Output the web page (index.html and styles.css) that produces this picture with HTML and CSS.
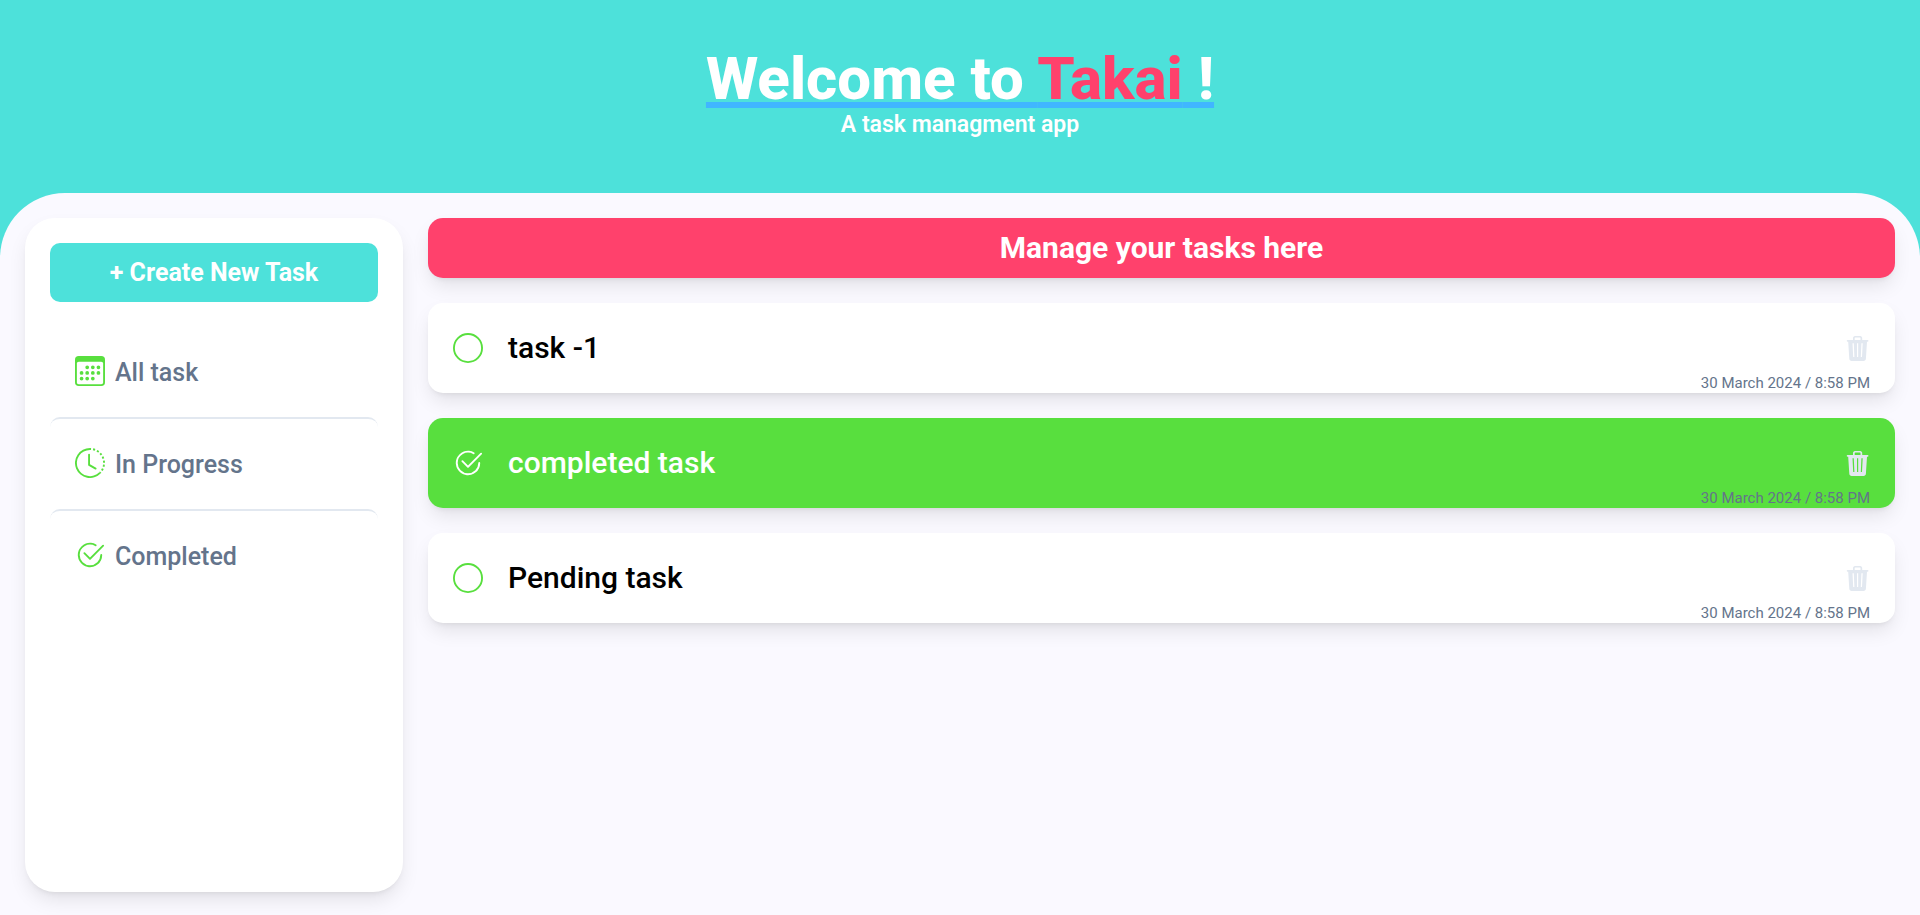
FILE: index.html
```html
<!DOCTYPE html>
<html lang="en">
<head>
<meta charset="utf-8">
<meta name="viewport" content="width=device-width, initial-scale=1">
<title>Takai</title>
<link rel="stylesheet" href="styles.css">
</head>
<body>
<svg class="sprite" aria-hidden="true">
  <symbol id="calendar" viewBox="0 0 16 16">
    <path d="M14 0H2a2 2 0 0 0-2 2v12a2 2 0 0 0 2 2h12a2 2 0 0 0 2-2V2a2 2 0 0 0-2-2M1 3.857C1 3.384 1.448 3 2 3h12c.552 0 1 .384 1 .857v10.286c0 .473-.448.857-1 .857H2c-.552 0-1-.384-1-.857z"/>
    <path d="M6.500 7a1 1 0 1 0 0-2 1 1 0 0 0 0 2m3 0a1 1 0 1 0 0-2 1 1 0 0 0 0 2m3 0a1 1 0 1 0 0-2 1 1 0 0 0 0 2m-9 3a1 1 0 1 0 0-2 1 1 0 0 0 0 2m3 0a1 1 0 1 0 0-2 1 1 0 0 0 0 2m3 0a1 1 0 1 0 0-2 1 1 0 0 0 0 2m3 0a1 1 0 1 0 0-2 1 1 0 0 0 0 2m-9 3a1 1 0 1 0 0-2 1 1 0 0 0 0 2m3 0a1 1 0 1 0 0-2 1 1 0 0 0 0 2m3 0a1 1 0 1 0 0-2 1 1 0 0 0 0 2"/>
  </symbol>
  <symbol id="clock" viewBox="0 0 16 16">
    <path d="M8.515 1.019A7 7 0 0 0 8 1V0a8 8 0 0 1 .589.022zm2.004.45a7 7 0 0 0-.985-.299l.219-.976q.576.129 1.126.342zm1.370.71a7 7 0 0 0-.439-.27l.493-.87a8 8 0 0 1 .979.654l-.615.789a7 7 0 0 0-.418-.302zm1.834 1.790a7 7 0 0 0-.653-.796l.724-.690q.406.429.747.910zm.744 1.352a7 7 0 0 0-.214-.468l.893-.450a8 8 0 0 1 .450 1.088l-.950.313a7 7 0 0 0-.179-.483m.530 2.507a7 7 0 0 0-.100-1.025l.985-.170q.100.580.116 1.170zm-.131 1.538q.050-.254.081-.510l.993.123a8 8 0 0 1-.230 1.155l-.964-.267q.069-.247.120-.501m-.952 2.379q.276-.436.486-.908l.914.405q-.240.540-.555 1.038zm-.964 1.205q.183-.183.350-.378l.758.653a8 8 0 0 1-.401.432z"/>
    <path d="M8 1a7 7 0 1 0 4.950 11.950l.707.707A8.001 8.001 0 1 1 8 0z"/>
    <path d="M7.500 3a.5.5 0 0 1 .5.5v5.210l3.248 1.856a.5.5 0 0 1-.496.868l-3.500-2A.5.5 0 0 1 7 9V3.500a.5.5 0 0 1 .5-.5"/>
  </symbol>
  <symbol id="done" viewBox="0 0 16 16">
    <path d="M2.500 8a5.500 5.500 0 0 1 8.250-4.764.5.5 0 0 0 .5-.866A6.500 6.500 0 1 0 14.500 8a.5.5 0 0 0-1 0 5.500 5.500 0 1 1-11 0"/>
    <path d="M15.354 3.354a.5.5 0 0 0-.708-.708L8 9.293 5.354 6.646a.5.5 0 1 0-.708.708l3 3a.5.5 0 0 0 .708 0z"/>
  </symbol>
  <symbol id="circle" viewBox="0 0 16 16">
    <path d="M8 15A7 7 0 1 1 8 1a7 7 0 0 1 0 14m0 1A8 8 0 1 0 8 0a8 8 0 0 0 0 16"/>
  </symbol>
  <symbol id="trash" viewBox="0 0 25 25">
    <path fill-rule="evenodd" d="M8 4V2.200C8 1 8.800 0 10 0h5.200c1.200 0 2 1 2 2.200V4H22.700c1 0 1 1.700 0 1.700h-.7L20.900 22.800c-.1 1.300-1 2.200-2.300 2.200H6.600c-1.300 0-2.200-.9-2.300-2.200L3.200 5.700H2.500C1.500 5.700 1.500 4 2.500 4ZM9.700 4H15.500V2.200c0-.4-.2-.6-.6-.6h-4.600c-.4 0-.6.2-.6.600ZM7.500 7.200l.7 13.900h1.200L8.800 7.200ZM12 7.200v13.900h1.200V7.200ZM16.400 7.200l-.6 13.900h1.200l.7-13.900Z"/>
  </symbol>
</svg>

<header class="hero">
  <h1 class="hero-title">Welcome to <span class="brand">Takai</span> !</h1>
  <p class="hero-subtitle">A task managment app</p>
</header>

<main class="panel">
  <aside class="sidebar">
    <button class="create" type="button">+ Create New Task</button>
    <nav class="filters" aria-label="Task filters">
      <button class="filter" type="button"><svg class="icon"><use href="#calendar"/></svg>All task</button>
      <button class="filter" type="button"><svg class="icon"><use href="#clock"/></svg>In Progress</button>
      <button class="filter" type="button"><svg class="icon"><use href="#done"/></svg>Completed</button>
    </nav>
  </aside>

  <section class="tasks">
    <h2 class="tasks-title">Manage your tasks here</h2>
    <article class="task">
      <button class="toggle" type="button" aria-label="Mark task -1 as completed"><svg class="icon"><use href="#circle"/></svg></button>
      <h3 class="task-name">task -1</h3>
      <button class="delete" type="button" aria-label="Delete task -1"><svg class="icon-trash"><use href="#trash"/></svg></button>
      <time class="date">30 March 2024 / 8:58 PM</time>
    </article>
    <article class="task task-done">
      <button class="toggle" type="button" aria-label="Reopen completed task"><svg class="icon"><use href="#done"/></svg></button>
      <h3 class="task-name">completed task</h3>
      <button class="delete" type="button" aria-label="Delete completed task"><svg class="icon-trash"><use href="#trash"/></svg></button>
      <time class="date">30 March 2024 / 8:58 PM</time>
    </article>
    <article class="task">
      <button class="toggle" type="button" aria-label="Mark Pending task as completed"><svg class="icon"><use href="#circle"/></svg></button>
      <h3 class="task-name">Pending task</h3>
      <button class="delete" type="button" aria-label="Delete Pending task"><svg class="icon-trash"><use href="#trash"/></svg></button>
      <time class="date">30 March 2024 / 8:58 PM</time>
    </article>
  </section>
</main>
</body>
</html>
```
FILE: styles.css
```css
:root {
  --teal: #4de1da;
  --pink: #ff416c;
  --green: #58df3e;
  --blue: #40b6ff;
  --slate: #64748b;
  --line: #e2e8f0;
  --shadow: 0 10px 20px -3px rgba(0, 0, 0, .1), 0 4px 6px -4px rgba(0, 0, 0, .1);
}

* {
  box-sizing: border-box;
  margin: 0;
}

body {
  display: flex;
  flex-direction: column;
  min-height: 100vh;
  background: var(--teal);
  color: #000;
  font-family: Roboto, "Liberation Sans", sans-serif;
}

button {
  padding: 0;
  border: 0;
  background: none;
  font: inherit;
  cursor: pointer;
}

svg {
  display: block;
  fill: currentColor;
}

.sprite {
  display: none;
}

.hero {
  padding: 49px 24px 52px;
  color: #fff;
  text-align: center;
}

.hero-title {
  font-size: 60px;
  font-weight: 800;
  line-height: 60px;
  text-decoration: underline 6px var(--blue);
}

.brand {
  color: var(--pink);
}

.hero-subtitle {
  font-size: 23px;
  font-weight: 600;
  line-height: 32px;
}

.panel {
  display: flex;
  flex: 1;
  gap: 25px;
  padding: 25px 25px 23px;
  border-radius: 65px 65px 0 0;
  background: #faf9ff;
}

.sidebar {
  flex: 0 0 378px;
  padding: 25px;
  border-radius: 30px;
  background: #fff;
  box-shadow: var(--shadow);
}

.create {
  width: 100%;
  padding: 14px;
  border-radius: 10px;
  background: var(--teal);
  color: #fff;
  font-size: 25px;
  font-weight: 700;
  line-height: 31px;
}

.filters {
  display: flex;
  flex-direction: column;
  margin-top: 23px;
}

.filter {
  display: flex;
  align-items: flex-end;
  gap: 10px;
  padding: 29px 25px 31px;
  border-top: 2px solid var(--line);
  border-radius: 10px;
  color: var(--slate);
  font-size: 25px;
  font-weight: 500;
  line-height: 26px;
}

.filter:first-child {
  border-color: transparent;
}

.icon {
  width: 30px;
  height: 30px;
  color: var(--green);
}

.tasks {
  display: flex;
  flex: 1;
  flex-direction: column;
  gap: 25px;
}

.tasks-title {
  padding: 12px;
  border-radius: 15px;
  background: var(--pink);
  box-shadow: var(--shadow);
  color: #fff;
  font-size: 30px;
  font-weight: 700;
  line-height: 36px;
  text-align: center;
}

.task {
  position: relative;
  display: flex;
  align-items: center;
  gap: 25px;
  padding: 25px;
  border-radius: 15px;
  background: #fff;
  box-shadow: var(--shadow);
}

.task-name {
  flex: 1;
  font-size: 30px;
  font-weight: 500;
  line-height: 40px;
}

.task-done {
  background: var(--green);
  color: #fff;
}

.task-done .icon {
  color: #fff;
}

.icon-trash {
  width: 25px;
  height: 25px;
  color: var(--line);
}

.date {
  position: absolute;
  right: 25px;
  bottom: 0;
  color: var(--slate);
  font-size: 15px;
  line-height: 20px;
}
```
